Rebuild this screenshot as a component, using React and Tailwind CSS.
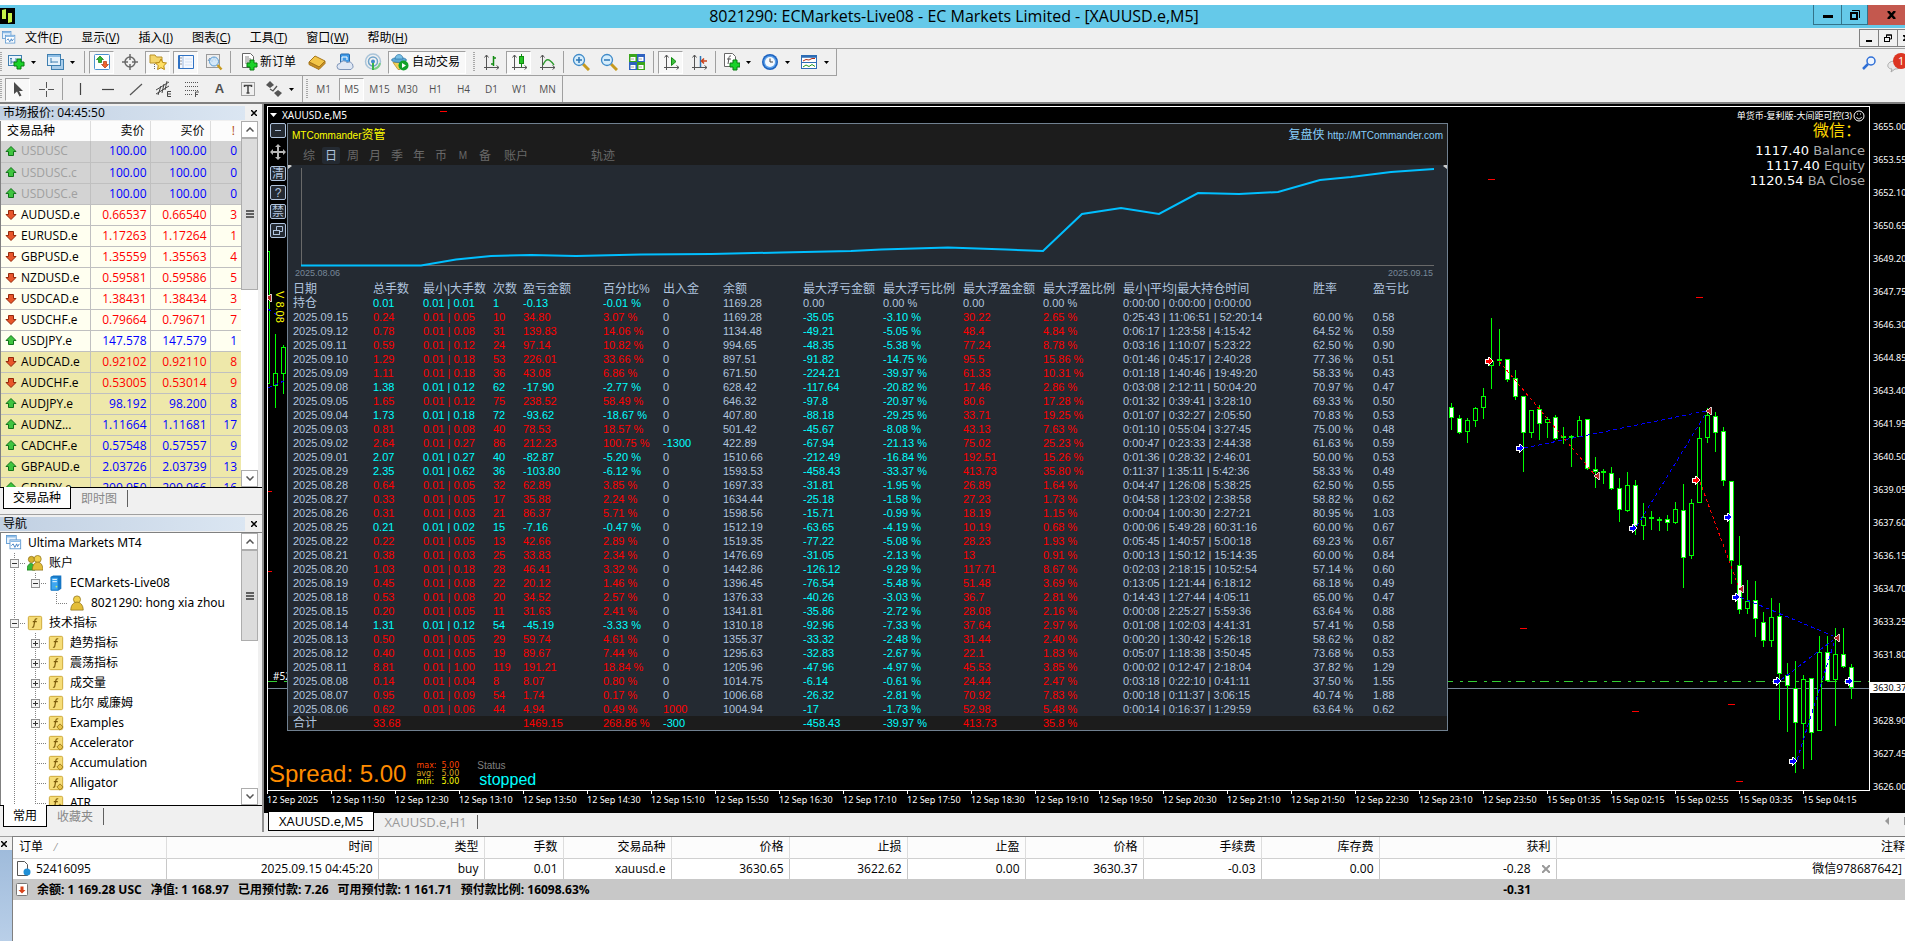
import React from 'react';

const UI = "font-['Open_Sans','Noto_Sans_CJK_SC',sans-serif]";
const CHART = "font-['Noto_Sans','Noto_Sans_CJK_SC',sans-serif]";
const REPORT = "font-['Liberation_Sans','Noto_Sans_CJK_SC',sans-serif]";

const menus = ['文件(F)', '显示(V)', '插入(I)', '图表(C)', '工具(T)', '窗口(W)', '帮助(H)'];

const quotes = [
  ['USDUSC', '100.00', '100.00', '0', 'up', 'off'],
  ['USDUSC.c', '100.00', '100.00', '0', 'up', 'off'],
  ['USDUSC.e', '100.00', '100.00', '0', 'up', 'off'],
  ['AUDUSD.e', '0.66537', '0.66540', '3', 'down', 'light'],
  ['EURUSD.e', '1.17263', '1.17264', '1', 'down', 'light'],
  ['GBPUSD.e', '1.35559', '1.35563', '4', 'down', 'light'],
  ['NZDUSD.e', '0.59581', '0.59586', '5', 'down', 'light'],
  ['USDCAD.e', '1.38431', '1.38434', '3', 'down', 'light'],
  ['USDCHF.e', '0.79664', '0.79671', '7', 'down', 'light'],
  ['USDJPY.e', '147.578', '147.579', '1', 'up', 'light'],
  ['AUDCAD.e', '0.92102', '0.92110', '8', 'down', 'dark'],
  ['AUDCHF.e', '0.53005', '0.53014', '9', 'down', 'dark'],
  ['AUDJPY.e', '98.192', '98.200', '8', 'up', 'dark'],
  ['AUDNZ...', '1.11664', '1.11681', '17', 'up', 'dark'],
  ['CADCHF.e', '0.57548', '0.57557', '9', 'up', 'dark'],
  ['GBPAUD.e', '2.03726', '2.03739', '13', 'up', 'dark'],
  ['GBPJPY.e', '200.950', '200.966', '16', 'up', 'dark'],
];

const rowBg = { off: 'bg-[#d3d3d3]', light: 'bg-[#fffff0]', dark: 'bg-[#eee8aa]' };

const tree = [
  { guides: [], icon: 'app', text: 'Ultima Markets MT4' },
  { guides: ['minus'], icon: 'users', text: '账户' },
  { guides: ['line', 'minusEnd'], icon: 'server', text: 'ECMarkets-Live08' },
  { guides: ['line', 'blank', 'end'], icon: 'user', text: '8021290: hong xia zhou' },
  { guides: ['minus'], icon: 'func', text: '技术指标' },
  { guides: ['line', 'plus'], icon: 'func', text: '趋势指标' },
  { guides: ['line', 'plus'], icon: 'func', text: '震荡指标' },
  { guides: ['line', 'plus'], icon: 'func', text: '成交量' },
  { guides: ['line', 'plus'], icon: 'func', text: '比尔 威廉姆' },
  { guides: ['line', 'plus'], icon: 'custom', text: 'Examples' },
  { guides: ['line', 'tee'], icon: 'custom', text: 'Accelerator' },
  { guides: ['line', 'tee'], icon: 'custom', text: 'Accumulation' },
  { guides: ['line', 'tee'], icon: 'custom', text: 'Alligator' },
  { guides: ['line', 'tee'], icon: 'custom', text: 'ATR' },
];

const reportHead = ['日期', '总手数', '最小|大手数', '次数', '盈亏金额', '百分比%', '出入金', '余额', '最大浮亏金额', '最大浮亏比例', '最大浮盈金额', '最大浮盈比例', '最小|平均|最大持仓时间', '胜率', '盈亏比'];

const reportRows = [
  ['持仓', '0.01', '0.01', '1', '-0.13', '-0.01', '0', '1169.28', '0.00', '0.00', '0.00', '0.00', '0:00:00 | 0:00:00 | 0:00:00', '', ''],
  ['2025.09.15', '0.24', '0.05', '10', '34.80', '3.07', '0', '1169.28', '-35.05', '-3.10', '30.22', '2.65', '0:25:43 | 11:06:51 | 52:20:14', '60.00 %', '0.58'],
  ['2025.09.12', '0.78', '0.08', '31', '139.83', '14.06', '0', '1134.48', '-49.21', '-5.05', '48.4', '4.84', '0:06:17 | 1:23:58 | 4:15:42', '64.52 %', '0.59'],
  ['2025.09.11', '0.59', '0.12', '24', '97.14', '10.82', '0', '994.65', '-48.35', '-5.38', '77.24', '8.78', '0:03:16 | 1:10:07 | 5:23:22', '62.50 %', '0.90'],
  ['2025.09.10', '1.29', '0.18', '53', '226.01', '33.66', '0', '897.51', '-91.82', '-14.75', '95.5', '15.86', '0:01:46 | 0:45:17 | 2:40:28', '77.36 %', '0.51'],
  ['2025.09.09', '1.11', '0.18', '36', '43.08', '6.86', '0', '671.50', '-224.21', '-39.97', '61.33', '10.31', '0:01:18 | 1:40:46 | 19:49:20', '58.33 %', '0.43'],
  ['2025.09.08', '1.38', '0.12', '62', '-17.90', '-2.77', '0', '628.42', '-117.64', '-20.82', '17.46', '2.86', '0:03:08 | 2:12:11 | 50:04:20', '70.97 %', '0.47'],
  ['2025.09.05', '1.65', '0.12', '75', '238.52', '58.49', '0', '646.32', '-97.8', '-20.97', '80.6', '17.28', '0:01:32 | 0:39:41 | 3:28:10', '69.33 %', '0.50'],
  ['2025.09.04', '1.73', '0.18', '72', '-93.62', '-18.67', '0', '407.80', '-88.18', '-29.25', '33.71', '19.25', '0:01:07 | 0:32:27 | 2:05:50', '70.83 %', '0.53'],
  ['2025.09.03', '0.81', '0.08', '40', '78.53', '18.57', '0', '501.42', '-45.67', '-8.08', '43.13', '7.63', '0:01:10 | 0:55:04 | 3:27:45', '75.00 %', '0.48'],
  ['2025.09.02', '2.64', '0.27', '86', '212.23', '100.75', '-1300', '422.89', '-67.94', '-21.13', '75.02', '25.23', '0:00:47 | 0:23:33 | 2:44:38', '61.63 %', '0.59'],
  ['2025.09.01', '2.07', '0.27', '40', '-82.87', '-5.20', '0', '1510.66', '-212.49', '-16.84', '192.51', '15.26', '0:01:36 | 0:28:32 | 2:46:01', '50.00 %', '0.53'],
  ['2025.08.29', '2.35', '0.62', '36', '-103.80', '-6.12', '0', '1593.53', '-458.43', '-33.37', '413.73', '35.80', '0:11:37 | 1:35:11 | 5:42:36', '58.33 %', '0.49'],
  ['2025.08.28', '0.64', '0.05', '32', '62.89', '3.85', '0', '1697.33', '-31.81', '-1.95', '26.89', '1.64', '0:04:47 | 1:26:08 | 5:38:25', '62.50 %', '0.55'],
  ['2025.08.27', '0.33', '0.05', '17', '35.88', '2.24', '0', '1634.44', '-25.18', '-1.58', '27.23', '1.73', '0:04:58 | 1:23:02 | 2:38:58', '58.82 %', '0.62'],
  ['2025.08.26', '0.31', '0.03', '21', '86.37', '5.71', '0', '1598.56', '-15.71', '-0.99', '18.19', '1.15', '0:00:04 | 1:00:30 | 2:27:21', '80.95 %', '1.03'],
  ['2025.08.25', '0.21', '0.02', '15', '-7.16', '-0.47', '0', '1512.19', '-63.65', '-4.19', '10.19', '0.68', '0:00:06 | 5:49:28 | 60:31:16', '60.00 %', '0.67'],
  ['2025.08.22', '0.22', '0.05', '13', '42.66', '2.89', '0', '1519.35', '-77.22', '-5.08', '28.23', '1.93', '0:05:45 | 1:40:57 | 5:00:18', '69.23 %', '0.67'],
  ['2025.08.21', '0.38', '0.03', '25', '33.83', '2.34', '0', '1476.69', '-31.05', '-2.13', '13', '0.91', '0:00:13 | 1:50:12 | 15:14:35', '60.00 %', '0.84'],
  ['2025.08.20', '1.03', '0.18', '28', '46.41', '3.32', '0', '1442.86', '-126.12', '-9.29', '117.71', '8.67', '0:02:03 | 2:18:15 | 10:52:54', '57.14 %', '0.60'],
  ['2025.08.19', '0.45', '0.08', '22', '20.12', '1.46', '0', '1396.45', '-76.54', '-5.48', '51.48', '3.69', '0:13:05 | 1:21:44 | 6:18:12', '68.18 %', '0.49'],
  ['2025.08.18', '0.53', '0.08', '20', '34.52', '2.57', '0', '1376.33', '-40.26', '-3.03', '36.7', '2.81', '0:14:43 | 1:27:44 | 4:05:11', '65.00 %', '0.47'],
  ['2025.08.15', '0.20', '0.05', '11', '31.63', '2.41', '0', '1341.81', '-35.86', '-2.72', '28.08', '2.16', '0:00:08 | 2:25:27 | 5:59:36', '63.64 %', '0.88'],
  ['2025.08.14', '1.31', '0.12', '54', '-45.19', '-3.33', '0', '1310.18', '-92.96', '-7.33', '37.64', '2.97', '0:01:08 | 1:02:03 | 4:41:31', '57.41 %', '0.58'],
  ['2025.08.13', '0.50', '0.05', '29', '59.74', '4.61', '0', '1355.37', '-33.32', '-2.48', '31.44', '2.40', '0:00:20 | 1:30:42 | 5:26:18', '58.62 %', '0.82'],
  ['2025.08.12', '0.40', '0.05', '19', '89.67', '7.44', '0', '1295.63', '-32.83', '-2.67', '22.1', '1.83', '0:05:07 | 1:18:38 | 3:50:45', '73.68 %', '0.53'],
  ['2025.08.11', '8.81', '1.00', '119', '191.21', '18.84', '0', '1205.96', '-47.96', '-4.97', '45.53', '3.85', '0:00:02 | 0:12:47 | 2:18:04', '37.82 %', '1.29'],
  ['2025.08.08', '0.14', '0.04', '8', '8.07', '0.80', '0', '1014.75', '-6.14', '-0.61', '24.44', '2.47', '0:03:18 | 0:22:10 | 0:41:11', '37.50 %', '1.55'],
  ['2025.08.07', '0.95', '0.09', '54', '1.74', '0.17', '0', '1006.68', '-26.32', '-2.81', '70.92', '7.83', '0:00:18 | 0:11:37 | 3:06:15', '40.74 %', '1.88'],
  ['2025.08.06', '0.62', '0.06', '44', '4.94', '0.49', '1000', '1004.94', '-17', '-1.73', '52.98', '5.48', '0:00:14 | 0:16:37 | 1:29:59', '63.64 %', '0.62'],
];

const prices = ['3655.00', '3653.55', '3652.10', '3650.65', '3649.20', '3647.75', '3646.30', '3644.85', '3643.40', '3641.95', '3640.50', '3639.05', '3637.60', '3636.15', '3634.70', '3633.25', '3631.80', '3630.37', '3628.90', '3627.45', '3626.00'];

const times = ['12 Sep 2025', '12 Sep 11:50', '12 Sep 12:30', '12 Sep 13:10', '12 Sep 13:50', '12 Sep 14:30', '12 Sep 15:10', '12 Sep 15:50', '12 Sep 16:30', '12 Sep 17:10', '12 Sep 17:50', '12 Sep 18:30', '12 Sep 19:10', '12 Sep 19:50', '12 Sep 20:30', '12 Sep 21:10', '12 Sep 21:50', '12 Sep 22:30', '12 Sep 23:10', '12 Sep 23:50', '15 Sep 01:35', '15 Sep 02:15', '15 Sep 02:55', '15 Sep 03:35', '15 Sep 04:15'];

// [wick top, wick bottom, body top, body bottom, filled]
const candles = [
  [403, 430, 407, 418, 1], [415, 434, 418, 433, 1], [418, 443, 420, 432, 0], [407, 427, 408, 421, 0],
  [388, 419, 396, 408, 0], [318, 389, 361, 366, 0], [329, 366, 359, 360, 0], [359, 382, 359, 380, 1],
  [370, 400, 378, 397, 1], [396, 472, 396, 433, 1], [410, 438, 410, 433, 0], [405, 440, 409, 424, 1],
  [417, 438, 419, 423, 0], [415, 440, 417, 439, 1], [427, 444, 436, 437, 0], [435, 467, 436, 437, 0],
  [416, 437, 420, 437, 0], [419, 470, 419, 469, 1], [457, 488, 469, 472, 1], [469, 484, 471, 472, 0],
  [467, 490, 473, 489, 1], [478, 522, 488, 510, 1], [472, 512, 485, 511, 0], [480, 535, 485, 526, 1],
  [503, 540, 517, 526, 0], [511, 530, 517, 518, 0], [517, 531, 519, 519, 0], [515, 531, 519, 523, 1],
  [502, 524, 509, 523, 0], [484, 588, 510, 558, 1], [499, 559, 503, 556, 0], [427, 503, 438, 503, 0],
  [408, 443, 415, 438, 0], [412, 452, 416, 433, 1], [427, 486, 431, 481, 1], [481, 584, 481, 561, 1],
  [536, 614, 565, 610, 1], [580, 614, 601, 609, 0], [581, 637, 600, 619, 1], [612, 647, 622, 641, 1],
  [598, 647, 617, 641, 0], [603, 720, 616, 674, 1], [663, 732, 675, 686, 1], [661, 773, 688, 723, 1],
  [675, 769, 679, 724, 0], [678, 760, 678, 733, 1], [636, 731, 652, 731, 0], [636, 682, 652, 681, 1],
  [628, 726, 654, 680, 0], [628, 668, 654, 667, 1], [664, 699, 667, 688, 1],
];

const buys = [[1520, 448], [1633, 528], [1728, 517], [1736, 597], [1777, 681], [1793, 761], [1849, 681]];
const sells = [[1489, 361], [1696, 480]];
const exits = [[1709, 411], [1597, 476], [1741, 589], [1837, 638], [269, 298]];
const ticks = [[1488, 179], [1696, 297], [1520, 628], [1632, 711], [1728, 704], [1736, 781], [440, 111], [265, 491], [265, 571]];

const orderHead = [
  ['时间', 'w-[212px]'], ['类型', 'w-[106px]'], ['手数', 'w-[79px]'], ['交易品种', 'w-[108px]'],
  ['价格', 'w-[118px]'], ['止损', 'w-[118px]'], ['止盈', 'w-[118px]'], ['价格', 'w-[118px]'],
  ['手续费', 'w-[118px]'], ['库存费', 'w-[118px]'],
];
const orderCells = ['2025.09.15 04:45:20', 'buy', '0.01', 'xauusd.e', '3630.65', '3622.62', '0.00', '3630.37', '-0.03', '0.00'];

const Plus = ({ x = 9, y = 8 }) => (
  <path d={`M${x + 3} ${y}h4v3h3v4h-3v3h-4v-3h-3v-4h3z`} fill="#19d229" stroke="#087a10" strokeWidth="1" />
);

const Axes = () => <path d="M4.500 2v15M2 14.500h15M2.500 4.500l2-2.500 2 2.500M14.500 12.500l2.500 2-2.500 2" stroke="#555" fill="none" />;

const icons = {
  newChart: <g><rect x="1.500" y="2.500" width="13" height="10" fill="#eaf4fc" stroke="#3f7fb0" /><path d="M4 5v6M4 9h8M3 6l1-1 1 1M9 5v3" stroke="#3f7fb0" fill="none" /><Plus x={7} y={6} /></g>,
  profiles: <g><rect x="5.500" y="6.500" width="12" height="10" fill="#a9cdea" stroke="#3f7fb0" /><rect x="1.500" y="1.500" width="13" height="11" fill="#e4f1fb" stroke="#3f7fb0" /><path d="M2 3h12" stroke="#8fbfe6" strokeWidth="2" /><path d="M5 5v5M5 9h7" stroke="#3f7fb0" /></g>,
  market: <g><rect x="1.500" y="1.500" width="15" height="15" rx="1" fill="#fff" stroke="#4a90d0" /><path d="M7 3l3.500 3.500H8.500v3h-3v-3H3.500z" fill="#2db52d" stroke="#137a13" strokeWidth=".7" /><path d="M12 15l-3.500-3.500h2v-3h3v3h2z" fill="#f0642d" stroke="#b23a10" strokeWidth=".7" /></g>,
  target: <g fill="none" stroke="#6a6a6a"><circle cx="9" cy="9" r="5" strokeWidth="1.500" /><path d="M9 1v6M9 11v6M1 9h6M11 9h6" strokeWidth="1.500" /></g>,
  folderStar: <g><path d="M1 2h5l1.500 2H13v6H1z" fill="#f4d56a" stroke="#b8922a" /><path d="M5.500 11v6" stroke="#666" strokeDasharray="1 1" /><path d="M12 6l1.700 3.500 3.800.500-2.700 2.700.600 3.800-3.400-1.800-3.400 1.800.600-3.800L6.500 10l3.800-.500z" fill="#ffe066" stroke="#b8860b" /></g>,
  dataWin: <g><rect x="1" y="2" width="16" height="14" rx="1" fill="#2f72c4" /><rect x="3" y="3" width="13" height="12" fill="#f4f8ff" /><path d="M6 3v12" stroke="#9db8dc" /><path d="M3.500 5h1M3.500 8h1M3.500 11h1" stroke="#333" /><path d="M8 6h7M8 9h7M8 12h7" stroke="#d6e3f3" /></g>,
  tester: <g><rect x="1.500" y="1.500" width="13" height="13" fill="#eee" stroke="#9a9a9a" /><path d="M3 8l2-3 2 4 2-5 2 4" stroke="#6d8fb3" fill="none" /><circle cx="9" cy="8.500" r="4.500" fill="#cfe6f9" fillOpacity=".85" stroke="#5a9bd1" /><path d="M12.500 12l4 4.500" stroke="#c79a1e" strokeWidth="2.500" /></g>,
  newOrder: <g><path d="M2.500.500h8l3 3v11h-11z" fill="#fff" stroke="#666" /><path d="M5 4h4M5 6h6M5 8h6M5 10h4" stroke="#888" /><Plus x={7} y={7} /></g>,
  book: <g><path d="M1 9l6-6 10 5-6 6z" fill="#f3c548" stroke="#a6761a" /><path d="M1 9v2.500l10 5 6-6V8l-6 6z" fill="#c98f22" stroke="#a6761a" /></g>,
  cloud: <g><rect x="4.500" y="1" width="9" height="9" rx="1" fill="#3f9be8" stroke="#2469ad" /><path d="M6 8V4h5v3" stroke="#fff" fill="none" /><path d="M4 16.500a3 3 0 010-6 4 4 0 017-1 3.500 3.500 0 014 7z" fill="#dfe7f3" stroke="#7f95b8" /></g>,
  signal: <g fill="none"><circle cx="9" cy="8.500" r="7.500" stroke="#a9c4d9" strokeWidth="1.500" /><circle cx="9" cy="8.500" r="4.500" stroke="#6fa3c9" strokeWidth="1.500" /><circle cx="9" cy="8.500" r="2" fill="#3e8ac8" /><path d="M9 10v7" stroke="#39b54a" strokeWidth="2" /><path d="M10 16a7.500 7.500 0 006-6" stroke="#7dcf86" strokeWidth="2" /></g>,
  auto: <g><path d="M2 9.500h12l-5 7H7z" fill="#f1cf58" stroke="#b38a1c" strokeWidth=".7" /><ellipse cx="8" cy="7" rx="7.500" ry="2.500" fill="#5aa7d6" stroke="#2d75a5" strokeWidth=".7" /><path d="M4 6c0-6 8-6 8 0z" fill="#79c0e6" stroke="#2d75a5" strokeWidth=".7" /><circle cx="12.500" cy="12.500" r="5" fill="#12a12a" /><path d="M11 10l4 2.500-4 2.500z" fill="#fff" /></g>,
  bar: <g><Axes /><path d="M11.500 3v10M9 11h2M11.500 5H14" stroke="#128a12" strokeWidth="1.500" /></g>,
  candle: <g><Axes /><path d="M11.500 1v13" stroke="#128a12" /><rect x="9.500" y="3.500" width="4" height="7" fill="#25c425" stroke="#128a12" /></g>,
  line: <g><Axes /><path d="M5 12c3-7 6-7 11 0" stroke="#2e9a2e" fill="none" strokeWidth="1.300" /></g>,
  zoomIn: <g><path d="M11 11l6 6" stroke="#c79a1e" strokeWidth="3" /><circle cx="7" cy="7" r="5.500" fill="#d6edfb" stroke="#3f8ac8" strokeWidth="1.300" /><path d="M4 7h6M7 4v6" stroke="#2d75b5" strokeWidth="1.500" /></g>,
  zoomOut: <g><path d="M11 11l6 6" stroke="#c79a1e" strokeWidth="3" /><circle cx="7" cy="7" r="5.500" fill="#d6edfb" stroke="#3f8ac8" strokeWidth="1.300" /><path d="M4 7h6" stroke="#2d75b5" strokeWidth="1.500" /></g>,
  tile: <g><path d="M1 1h8v8H1zM9 9h8v8H9z" fill="#3aa51c" /><path d="M9 1h8v8H9zM1 9h8v8H1z" fill="#2f62c0" /><path d="M2.500 4h5v4h-5zM10.500 4h5v4h-5zM2.500 12h5v4h-5zM10.500 12h5v4h-5z" fill="#fff" /><path d="M3 6h3M11 6h3M3 14h3M11 14h3" stroke="#aaa" /></g>,
  scroll: <g><Axes /><path d="M9.500 4.500l4.500 4-4.500 4z" fill="#3ec13e" stroke="#128a12" /></g>,
  shift: <g><Axes /><path d="M10.500 3v11" stroke="#2d75b5" strokeWidth="1.500" /><path d="M17 8h-5M14 5.500L11.500 8l2.500 2.500" stroke="#c8401a" strokeWidth="1.500" fill="none" /></g>,
  indicators: <g><path d="M2.500.500h8l3 3v10h-11z" fill="#fff" stroke="#666" /><path d="M9 3c-2-.5-2 1-2.200 3L6 11M5 6h4" stroke="#555" fill="none" /><Plus x={8} y={7} /></g>,
  clock: <g><circle cx="9" cy="9" r="8" fill="#1d63c0" /><circle cx="9" cy="9" r="6.500" fill="#5a9fe8" /><circle cx="9" cy="9" r="5" fill="#f4f9ff" /><path d="M9 5.500V9h3" stroke="#444" fill="none" /></g>,
  template: <g><rect x="1.500" y="2.500" width="15" height="13" fill="#fff" stroke="#2d6db5" /><path d="M1 3.500h16" stroke="#2d6db5" strokeWidth="2.500" /><path d="M1 9.500h16" stroke="#2d6db5" /><path d="M3 8l3-1.500 3 .5 3-1.500h3" stroke="#b03018" fill="none" /><path d="M3 14l3-2 3 1.500 3-2 3 2" stroke="#229a22" fill="none" /></g>,
  pointer: <path d="M5 2v12l3-2.500 2.500 5 2-1-2.500-4.500h4z" fill="#4a4a4a" />,
  cross: <path d="M9.500 2v6M9.500 11v6M2 9.500h6M11 9.500h6" stroke="#555" />,
  vline: <path d="M9.500 3v12" stroke="#444" strokeWidth="1.200" />,
  hline: <path d="M3 9.500h12" stroke="#444" strokeWidth="1.200" />,
  trend: <path d="M3 15L15 4" stroke="#555" strokeWidth="1.200" />,
  channel: <g stroke="#444" fill="none"><path d="M1 10l13-8M1 14l13-8M3 15l3-9M7 13l2-9M10 10l2-9" /><path d="M16 11.500h-3.500v5H16M12.500 14H16" /></g>,
  fibo: <g stroke="#555" fill="none"><path d="M2 2.500h14M2 6.500h14M2 10.500h14M2 14.500h8" strokeDasharray="1 1" /><path d="M12.500 17v-5H16M12.500 14.500H15" /></g>,
  label: <g><rect x="2.500" y="2.500" width="13" height="13" fill="none" stroke="#555" strokeDasharray="1 1" /><path d="M5.500 7V5.500h7V7M9 5.500V13M7.500 13h3" stroke="#444" strokeWidth="1.500" fill="none" /></g>,
  arrows: <g fill="#555"><path d="M1 5l4-4 4 4-4 3zM9 13l4-3 4 3-4 4z" /><path d="M5 9l3 2 4-5" stroke="#555" fill="none" strokeWidth="1.300" /></g>,
  app: <g><rect x=".500" y=".500" width="11" height="9" fill="#e9f3fd" stroke="#5a97d0" /><rect x="4.500" y="5.500" width="12" height="10" fill="#fff" stroke="#5a97d0" /><path d="M1 2h10M5 7h11" stroke="#8dbbe6" strokeWidth="1.500" /><path d="M6 12l2-2 2 4 2-4 1 3 2-3" stroke="#3a7bc0" fill="none" /></g>,
  users: <g stroke="#8a6d12" strokeWidth=".800"><circle cx="5" cy="5" r="3.500" fill="#d6b32f" /><path d="M0 17c0-10 9-10 9 0z" fill="#38b838" stroke="#137a13" /><circle cx="12" cy="4.500" r="4" fill="#f0cf4a" /><path d="M6 17c0-12 12-12 12 0z" fill="#e3bd38" /></g>,
  user: <g stroke="#8a6d12" strokeWidth=".800"><circle cx="9" cy="5" r="4" fill="#f0cf4a" /><path d="M2 17c0-12 14-12 14 0z" fill="#e3bd38" /></g>,
  server: <g><path d="M3 2l3-1.500h9v15L12 17.500H3z" fill="#1676c4" /><path d="M3.500 2.500h8v14.500h-8z" fill="#3ea7f0" stroke="#1676c4" /><path d="M5 5h5M5 7.500h5" stroke="#fff" /><circle cx="9.500" cy="13" r="1" fill="#c8f06a" /></g>,
  func: <g><rect x="1.500" y="1.500" width="15" height="15" rx="1.500" fill="#f6dd78" stroke="#c9a431" /><path d="M11.500 4.500c-2-1-2.500.500-2.800 2.500L7.500 13c-.300 1-1.200 1-1.800.500M6.500 7.500H11" stroke="#7a5a0a" fill="none" strokeWidth="1.300" /></g>,
};
icons.custom = <g>{icons.func}<path d="M13.500 10l3.500 3.500-3.500 3.500-3.500-3.500z" fill="#e8c34a" stroke="#9a7a1a" /></g>;

const Icon = ({ name, className = 'h-[18px] w-[18px]' }) => (
  <svg viewBox="0 0 18 18" className={`shrink-0 ${className}`} aria-hidden="true">{icons[name]}</svg>
);

const Grip = () => <div className="h-5 w-[2px] shrink-0 bg-[repeating-linear-gradient(#a8a8a8_0_1px,transparent_1px_2px)]" />;
const Sep = () => <div className="mx-px h-[22px] w-px shrink-0 bg-[#a0a0a0]" />;

const Tool = ({ name, label, on, children }) => (
  <button aria-label={label} className={`flex h-[23px] w-[25px] shrink-0 items-center justify-center border text-[#505050] ${on ? 'border-t-[#a0a0a0] border-l-[#a0a0a0] border-r-white border-b-white bg-[#f8f8f8]' : 'border-transparent'}`}>
    {name ? <Icon name={name} /> : children}
  </button>
);

const Split = ({ name, label }) => (
  <button aria-label={label} className="flex h-[23px] w-9 shrink-0 items-center gap-[6px] pl-[2px]">
    <Icon name={name} />
    <svg viewBox="0 0 5 3" className="h-[3px] w-[5px]"><path d="M0 0h5L2.500 3z" /></svg>
  </button>
);

const Guide = ({ type }) => (
  <svg viewBox="0 0 21 20" className="h-5 w-[21px] shrink-0" fill="none" stroke="#808080" strokeDasharray="1 1">
    {type !== 'blank' && <path d={type === 'end' || type === 'minusEnd' ? 'M10.500 0v10' : 'M10.500 0v20'} />}
    {type !== 'blank' && type !== 'line' && <path d="M10 10.500h11" />}
    {/plus|minus/.test(type) && (
      <g strokeDasharray="none">
        <rect x="6.500" y="6.500" width="8" height="8" fill="#f4f4f4" stroke="#919191" />
        <path d={type === 'plus' ? 'M8 10.500h5M10.500 8v5' : 'M8 10.500h5'} stroke="#333" />
      </g>
    )}
  </svg>
);

const QuoteArrow = ({ dir }) => (
  <svg viewBox="0 0 12 11" className="h-[11px] w-3 shrink-0">
    <path d={dir === 'up' ? 'M6 .500L11 5.500H8.500v4h-5v-4H1z' : 'M6 10.500L11 5.500H8.500v-4h-5v4H1z'} fill={dir === 'up' ? '#3fc43f' : '#e8562a'} stroke={dir === 'up' ? '#12731a' : '#93290c'} />
  </svg>
);

const ScrollBar = ({ thumb }) => (
  <div className="flex w-[17px] shrink-0 flex-col bg-white">
    <button aria-label="up" className="flex h-[17px] shrink-0 items-center justify-center border border-[#adadad]">
      <svg viewBox="0 0 8 5" className="h-[5px] w-2" fill="none" stroke="#555" strokeWidth="1.500"><path d="M.500 4.500L4 1l3.500 3.500" /></svg>
    </button>
    <div className={`flex items-center justify-center border border-[#adadad] bg-[#dcdcdc] ${thumb}`}>
      <svg viewBox="0 0 8 8" className="h-2 w-2" stroke="#606060" strokeWidth="2"><path d="M0 1h8M0 4h8M0 7h8" /></svg>
    </div>
    <div className="flex-1" />
    <button aria-label="down" className="flex h-[17px] shrink-0 items-center justify-center border border-[#adadad]">
      <svg viewBox="0 0 8 5" className="h-[5px] w-2" fill="none" stroke="#555" strokeWidth="1.500"><path d="M.500.500L4 4l3.500-3.500" /></svg>
    </button>
  </div>
);

const PanelTitle = ({ children }) => (
  <div className="flex h-[17px] shrink-0 items-center">
    <div className="h-[14px] flex-1 bg-linear-to-r from-[#c1d0e2] to-[#dbe6f2] pl-[3px] leading-[13px]">{children}</div>
    <button aria-label="close" className="flex w-[17px] justify-center">
      <svg viewBox="0 0 6 6" className="h-[6px] w-[6px]" stroke="#000" strokeWidth="1.500"><path d="M0 0l6 6M6 0L0 6" /></svg>
    </button>
  </div>
);

const PanelTabs = ({ active, other }) => (
  <div className="flex h-[27px] shrink-0 items-start border-t border-black pl-[3px]">
    <button className="-mt-px h-[22px] border border-t-0 border-black bg-white px-[9px] leading-5">{active}</button>
    <button className="mt-[2px] h-[17px] border-r border-[#606060] px-[10px] leading-4 text-[#888]">{other}</button>
  </div>
);

const TitleBar = () => (
  <header className="mt-[5px] flex h-[23px] items-start bg-[#65c9e9]">
    <svg viewBox="0 0 15 16" className="mt-[3px] h-4 w-[15px] shrink-0"><rect width="15" height="16" /><path d="M2 2l4-1v10H2zM8 5h4v9l-4 1z" fill="#c4f04a" /></svg>
    <h1 className="flex-1 pl-20 text-center text-[16px] leading-[22px]">8021290: ECMarkets-Live08 - EC Markets Limited - [XAUUSD.e,M5]</h1>
    <button aria-label="minimize" className="flex h-5 w-[29px] items-center justify-center border border-t-0 border-[#33738a]"><span className="mt-1 h-[3px] w-[10px] bg-black" /></button>
    <button aria-label="restore" className="flex h-5 w-[26px] items-center justify-center border-r border-b border-[#33738a]">
      <svg viewBox="0 0 10 10" className="h-[10px] w-[10px]" fill="none" stroke="#000"><path d="M2 .500h7.500V8" /><rect x="1" y="3" width="6" height="6" strokeWidth="2" /></svg>
    </button>
    <button aria-label="close window" className="flex h-5 w-[37px] items-center justify-center bg-[#c4584e] pl-[9px]">
      <svg viewBox="0 0 9 8" className="h-2 w-[9px]" stroke="#000" strokeWidth="2.500"><path d="M1 0l7 8M8 0L1 8" /></svg>
    </button>
  </header>
);

const MenuBar = () => (
  <nav className="flex h-[21px] items-center overflow-hidden border-b border-[#a0a0a0]">
    <Icon name="app" className="ml-[2px] h-[14px] w-[14px]" />
    <div className="ml-[9px] flex flex-1 gap-[19px]">
      {menus.map((m) => (
        <button key={m} className="leading-4">{m.slice(0, 3)}<u className="underline-offset-1">{m[3]}</u>)</button>
      ))}
    </div>
    <button aria-label="minimize chart" className="flex h-[18px] w-5 items-end justify-center border border-[#808080] pb-1"><span className="h-[2px] w-[6px] bg-black" /></button>
    <button aria-label="restore chart" className="flex h-[18px] w-[19px] items-center justify-center border-y border-r border-[#808080]">
      <svg viewBox="0 0 8 8" className="h-2 w-2" fill="none" stroke="#000"><path d="M2.500 3V1h5v4H6" /><path d="M2 1h6" /><rect x=".500" y="3.500" width="5" height="4" /></svg>
    </button>
    <button aria-label="close chart" className="flex h-[18px] w-[7px] items-center justify-end overflow-hidden border-y border-[#808080]">
      <svg viewBox="0 0 2 6" className="h-[6px] w-[2px]" stroke="#000" strokeWidth="2"><path d="M0 0l4 3-4 3" fill="none" /></svg>
    </button>
  </nav>
);

const Toolbars = () => (
  <div className="flex border-b-2 border-[#808080]">
    <div className="min-w-0 flex-1">
      <div className="flex h-[27px] w-fit items-center gap-[3px] border-r border-b border-[#a0a0a0] pr-[2px]">
        <Grip />
        <Split name="newChart" label="new chart" />
        <Split name="profiles" label="profiles" />
        <Sep />
        <Tool name="market" label="market watch" on />
        <Tool name="target" label="crosshair window" />
        <Tool name="folderStar" label="navigator" on />
        <Tool name="dataWin" label="terminal" on />
        <Tool name="tester" label="tester" />
        <Sep />
        <button className="flex h-[23px] w-[66px] shrink-0 items-center gap-[2px] pl-[5px] whitespace-nowrap"><Icon name="newOrder" />新订单</button>
        <Tool name="book" label="editor" />
        <Tool name="cloud" label="hosting" />
        <Tool name="signal" label="signals" />
        <button className="flex h-[23px] w-[78px] shrink-0 items-center gap-[3px] border border-t-[#a0a0a0] border-r-white border-b-white border-l-[#a0a0a0] bg-[#f8f8f8] pl-[2px] whitespace-nowrap"><Icon name="auto" />自动交易</button>
        <span className="w-px" />
        <Grip />
        <Tool name="bar" label="bar chart" />
        <Tool name="candle" label="candlesticks" on />
        <Tool name="line" label="line chart" />
        <Sep />
        <Tool name="zoomIn" label="zoom in" />
        <Tool name="zoomOut" label="zoom out" />
        <Tool name="tile" label="tile windows" />
        <Sep />
        <Tool name="scroll" label="auto scroll" on />
        <Tool name="shift" label="chart shift" />
        <Sep />
        <Split name="indicators" label="indicators" />
        <Split name="clock" label="periods" />
        <Split name="template" label="templates" />
      </div>
      <div className="flex h-[26px] w-fit items-center gap-[3px] border-r border-[#a0a0a0] pr-[2px]">
        <Grip />
        <Tool name="pointer" label="cursor" on />
        <Tool name="cross" label="crosshair" />
        <Sep />
        <Tool name="vline" label="vertical line" />
        <Tool name="hline" label="horizontal line" />
        <Tool name="trend" label="trendline" />
        <Tool name="channel" label="channel" />
        <Tool name="fibo" label="fibonacci" />
        <Tool><b className="font-['Liberation_Sans',sans-serif] text-[13px]">A</b></Tool>
        <Tool name="label" label="text label" />
        <Split name="arrows" label="arrows" />
        <div className="h-[26px] w-px bg-[#a0a0a0]" />
        <Grip />
        {['M1', 'M5', 'M15', 'M30', 'H1', 'H4', 'D1', 'W1', 'MN'].map((p) => (
          <Tool key={p} on={p === 'M5'}><span className="text-[10px]">{p}</span></Tool>
        ))}
      </div>
    </div>
    <div className="flex h-7 items-center gap-[10px]">
      <svg viewBox="0 0 14 14" className="h-[14px] w-[14px]" fill="none" stroke="#2f6fd6"><circle cx="9" cy="5" r="4" strokeWidth="1.500" fill="#eef5ff" /><path d="M6 8l-5 5" strokeWidth="2.500" /></svg>
      <svg viewBox="0 0 19 20" className="h-5 w-[19px]">
        <path d="M9 8c-9 0-9 8-3 8l-1 3 4-3c9 0 9-8 0-8z" fill="#e8e8e8" stroke="#aaa" />
        <circle cx="15" cy="8" r="8" fill="#dc3522" />
        <text x="12" y="12" fontSize="11" fill="#fff">1</text>
      </svg>
    </div>
  </div>
);

const MarketWatch = () => (
  <>
    <PanelTitle>市场报价: 04:45:50</PanelTitle>
    <div className="flex h-[366px] shrink-0 overflow-hidden border-l border-[#808080] bg-white">
      <div className="flex-1 overflow-hidden">
        <table className="w-full table-fixed border-collapse">
          <thead>
            <tr className="h-5 bg-[#fcfcfc]">
              <th className="w-[89px] border-r border-[#ddd] pl-[6px] text-left font-normal">交易品种</th>
              <th className="w-[60px] border-r border-[#ddd] pr-[5px] text-right font-normal">卖价</th>
              <th className="w-[60px] border-r border-[#ddd] pr-[5px] text-right font-normal">买价</th>
              <th className="pr-[6px] text-right font-normal text-[#b04a10]">!</th>
            </tr>
          </thead>
          <tbody>
            {quotes.map(([symbol, bid, ask, spread, dir, kind]) => {
              const color = dir === 'up' ? 'text-[#0000ff]' : 'text-[#ff0000]';
              return (
                <tr key={symbol} className={`h-[21px] ${rowBg[kind]}`}>
                  <td className="border-r border-b border-[#c0c0c0] p-0 pl-[4px] leading-5">
                    <div className={`flex items-center gap-[4px] ${kind === 'off' ? 'text-[#a0a0a0]' : ''}`}><QuoteArrow dir={dir} />{symbol}</div>
                  </td>
                  <td className={`border-r border-b border-[#c0c0c0] p-0 pr-[3px] text-right leading-5 ${color}`}>{bid}</td>
                  <td className={`border-r border-b border-[#c0c0c0] p-0 pr-[3px] text-right leading-5 ${color}`}>{ask}</td>
                  <td className={`border-b border-[#c0c0c0] p-0 pr-[4px] text-right leading-5 ${color}`}>{spread}</td>
                </tr>
              );
            })}
          </tbody>
        </table>
      </div>
      <ScrollBar thumb="h-[152px]" />
      <div className="w-1 bg-[#f0f0f0]" />
    </div>
    <PanelTabs active="交易品种" other="即时图" />
  </>
);

const Navigator = () => (
  <>
    <div className="border-t border-[#a0a0a0]"><PanelTitle>导航</PanelTitle></div>
    <div className="flex h-[273px] shrink-0 overflow-hidden border-t border-l border-[#808080] bg-white">
      <ul className={`flex-1 overflow-hidden pl-[3px] ${CHART}`}>
        {tree.map((n) => (
          <li key={n.text} className="flex h-5 items-center whitespace-nowrap">
            {n.guides.map((g, i) => <Guide key={i} type={g} />)}
            <span className="flex w-[24px] shrink-0 pl-[2px]"><Icon name={n.icon} className="h-4 w-4" /></span>
            {n.text}
          </li>
        ))}
      </ul>
      <ScrollBar thumb="h-[91px]" />
      <div className="w-1 bg-[#f0f0f0]" />
    </div>
    <PanelTabs active="常用" other="收藏夹" />
  </>
);

const Arrow = ({ x, y, fill }) => (
  <path d={`M${x - 4} ${y - 2}h3v-2h1l4 4-4 4h-1v-2h-3z`} fill={fill} stroke="#fff" />
);

const PriceChart = () => (
  <svg viewBox="268 107 1601 683" preserveAspectRatio="xMaxYMin slice" className="absolute inset-0 h-full w-full" shapeRendering="crispEdges">
    <path d="M268 681.500h1601" stroke="#32cd32" strokeDasharray="9 7 3 5" />
    <path d="M268 688.500h1601" stroke="#778899" />
    <g stroke="#00ff00">
      {candles.map(([top, bottom, open, close, filled], i) => (
        <g key={i}>
          <path d={`M${1451 + i * 8}.5 ${top}V${bottom}`} />
          <rect x={1449.5 + i * 8} y={open + 0.5} width="4" height={Math.max(close - open - 1, 0.5)} fill={filled ? '#fff' : '#000'} />
        </g>
      ))}
      <path d="M268 251.500h1.500v132h-1.500M275.500 334v74M283.500 345v49" fill="none" />
      <rect x="273.500" y="373.500" width="4" height="12" fill="#000" />
      <rect x="281.500" y="347.500" width="4" height="26" fill="#000" />
    </g>
    <g fill="none" stroke="#0000ff" strokeDasharray="4 3">
      <path d="M1524 448L1706 411M1637 526L1706 413M1740 597L1833 636M1781 680L1833 640M1797 760L1835 640M268 309l18 12M268 388l18-8" />
    </g>
    <path d="M1499 361L1594 474M1700 482L1738 585" fill="none" stroke="#ff0000" strokeDasharray="3 3" />
    {exits.map(([x, y]) => <path key={x} d={`M${x - 3} ${y}l5-4v8z`} fill="#b22222" stroke="#fff" strokeWidth=".800" />)}
    {buys.map(([x, y]) => <Arrow key={x} x={x} y={y} fill="#0000ff" />)}
    {sells.map(([x, y]) => <Arrow key={x} x={x} y={y} fill="#ff0000" />)}
    {ticks.map(([x, y]) => <rect key={`${x}-${y}`} x={x} y={y} width="7" height="1" fill="#ff0000" />)}
  </svg>
);

const tone = (v) => (Number(v) < 0 ? 'text-[#00ffff]' : Number(v) > 0 ? 'text-[#ff0000]' : '');

const Report = () => (
  <section className={`absolute top-[16px] left-[19px] w-[1161px] border border-[#708090] bg-[#242a32] text-[11px] text-[#b0c4de] ${REPORT}`}>
    <div className="bg-[#1c1c1c]">
      <div className="flex h-[22px] items-center justify-between pr-1 pl-[4px] text-[12px]">
        <h2 className="text-[#ffff00]"><span className="text-[10px]">MTCommander</span>资管</h2>
        <a href="#site" className="text-[10px] text-[#87cefa]"><span className="text-[12px]">复盘侠</span> http://MTCommander.com</a>
      </div>
      <div className="flex h-[19px] items-center gap-1 pl-3 text-[12px] leading-4 text-[#696969]">
        {['综', '日', '周', '月', '季', '年', '币', 'M', '备'].map((t) => (
          <button key={t} className={`h-[17px] w-[18px] rounded-xs ${t === '日' ? 'bg-[#242a32] text-[#b0c4de]' : ''} ${t === 'M' ? 'text-[10px]' : ''}`}>{t}</button>
        ))}
        <button className="w-9">账户</button>
        <button className="ml-[47px] w-9">轨迹</button>
      </div>
    </div>
    <svg viewBox="287 165 1159 102" className="block h-[102px] w-full" fill="none">
      <path d="M300.500 168V265.500H1433" stroke="#696969" />
      <path d="M300 265.500H420L455 259.500L490 256L530 255L575 256L640 254.500L710 254L780 252.500L850 251L880 249.500L947 247.500L1005 249.500L1042 251L1081 214L1120 208L1158 214L1197 193L1238 194L1277 192L1319 180L1350 177L1390 172L1433 169" stroke="#00bfff" strokeWidth="2" />
      <path d="M287 163l4 3-4 3zM1446 163l-4 3 4 3z" fill="#ccc" />
    </svg>
    <div className="flex h-3 justify-between pr-[14px] pl-[7px] text-[9px] leading-[12px] text-[#778899]">
      <span>2025.08.06</span>
      <span>2025.09.15</span>
    </div>
    <table className="mt-[3px] w-full table-fixed border-collapse text-left leading-[14px] whitespace-nowrap">
      <colgroup>
        <col className="w-[85px]" /><col className="w-[50px]" /><col className="w-[70px]" /><col className="w-[30px]" />
        <col className="w-[80px]" /><col className="w-[60px]" /><col className="w-[60px]" /><col className="w-[80px]" />
        <col className="w-[80px]" /><col className="w-[80px]" /><col className="w-[80px]" /><col className="w-[80px]" />
        <col className="w-[190px]" /><col className="w-[60px]" /><col />
      </colgroup>
      <thead>
        <tr className="h-[14px]">
          {reportHead.map((h, i) => <th key={h} className={`p-0 text-[12px] font-normal ${i ? '' : 'pl-[5px]'}`}>{h}</th>)}
        </tr>
      </thead>
      <tbody>
        {reportRows.map((r) => {
          const c = tone(r[4]);
          return (
            <tr key={r[0]} className="h-[14px]">
              <td className={`p-0 pl-[5px] ${r[0] === '持仓' ? 'text-[12px]' : ''}`}>{r[0]}</td>
              <td className={`p-0 ${c}`}>{r[1]}</td>
              <td className={`p-0 ${c}`}>0.01 | {r[2]}</td>
              <td className={`p-0 ${c}`}>{r[3]}</td>
              <td className={`p-0 ${c}`}>{r[4]}</td>
              <td className={`p-0 ${c}`}>{r[5]} %</td>
              <td className={`p-0 ${tone(r[6])}`}>{r[6]}</td>
              <td className="p-0">{r[7]}</td>
              <td className={`p-0 ${tone(r[8])}`}>{r[8]}</td>
              <td className={`p-0 ${tone(r[9])}`}>{r[9]} %</td>
              <td className={`p-0 ${tone(r[10])}`}>{r[10]}</td>
              <td className={`p-0 ${tone(r[11])}`}>{r[11]} %</td>
              <td className="p-0">{r[12]}</td>
              <td className="p-0">{r[13]}</td>
              <td className="p-0">{r[14]}</td>
            </tr>
          );
        })}
      </tbody>
      <tfoot>
        <tr className="h-[14px] bg-[#1c1c1c] text-[#ff0000]">
          <td className="p-0 pl-[5px] text-[12px] text-[#b0c4de]">合计</td>
          <td className="p-0">33.68</td>
          <td /><td />
          <td className="p-0">1469.15</td>
          <td className="p-0">268.86 %</td>
          <td className="p-0 text-[#00ffff]">-300</td>
          <td />
          <td className="p-0 text-[#00ffff]">-458.43</td>
          <td className="p-0 text-[#00ffff]">-39.97 %</td>
          <td className="p-0">413.73</td>
          <td className="p-0">35.8 %</td>
          <td /><td /><td />
        </tr>
      </tfoot>
    </table>
  </section>
);

const sideBtn = 'flex h-[15px] w-4 items-center justify-center rounded-xs border border-[#b0c4de] bg-[#242a32] text-[12px] leading-none';

const SideButtons = () => (
  <div className={`absolute top-[16px] left-[2px] flex flex-col gap-1 text-[#b0c4de] ${REPORT}`}>
    <button aria-label="collapse" className={sideBtn}><span className="h-px w-[6px] bg-[#b0c4de]" /></button>
    <button aria-label="move" className="my-[2px] h-4 w-4">
      <svg viewBox="0 0 16 16" className="h-4 w-4" fill="#b8b8b8"><path d="M8 0l3 3H9v4h4V5l3 3-3 3V9H9v4h2l-3 3-3-3h2V9H3v2L0 8l3-3v2h4V3H5z" /></svg>
    </button>
    <button className={sideBtn}>清</button>
    <button className={sideBtn}>?</button>
    <button className={sideBtn}>禁</button>
    <button aria-label="windows" className={sideBtn}>
      <svg viewBox="0 0 10 10" className="h-[10px] w-[10px]" fill="none" stroke="#b0c4de"><path d="M3.500 4V.500h6v5H7" /><rect x=".500" y="4.500" width="6" height="4" /></svg>
    </button>
  </div>
);

const ChartWindow = () => (
  <div className={`flex flex-1 flex-col bg-black pt-[2px] pl-[3px] text-white ${CHART}`}>
    <div className="flex flex-1">
      <div className="relative flex-1 overflow-hidden border border-white">
        <PriceChart />
        <div className="absolute top-[2px] left-[2px] flex items-center gap-[5px] text-[10px] leading-3">
          <svg viewBox="0 0 7 4" className="h-1 w-[7px]"><path d="M0 0h7L3.500 4z" fill="#fff" /></svg>
          XAUUSD.e,M5
        </div>
        <div className={`absolute top-[184px] left-[6px] text-[11px] leading-3 text-[#ffff00] [writing-mode:vertical-rl] ${REPORT}`}>V 8.08</div>
        <div className="absolute top-[563px] left-[5px] text-[10px] leading-3">#52416095</div>
        <SideButtons />
        <Report />
        <div className="absolute top-[2px] right-1 flex flex-col items-end text-right">
          <div className="flex items-center gap-px text-[9px] leading-[14px]">
            单货币-复利版-大间距可控(3)
            <svg viewBox="0 0 12 12" className="h-3 w-3" fill="none" stroke="#fff"><circle cx="6" cy="6" r="5" /><path d="M3.500 7c1 2.500 4 2.500 5 0M4.500 3.500v1M7.500 3.500v1" /></svg>
          </div>
          <div className="mb-[6px] pr-[4px] text-[16px] leading-[14px] text-[#ffd700]">微信：</div>
          <div className="font-['DejaVu_Sans',sans-serif] text-[13px] leading-[15px] text-[#a9a9a9]">
            <div><span className="text-white">1117.40</span> Balance</div>
            <div><span className="text-white">1117.40</span> Equity</div>
            <div><span className="text-white">1120.54</span> BA Close</div>
          </div>
        </div>
        <div className={`absolute bottom-0 left-px flex items-center gap-[10px] ${REPORT}`}>
          <div className="text-[24px] leading-8 text-[#ff8c00]">Spread: 5.00</div>
          <div className="grid grid-cols-[25px_auto] font-['DejaVu_Sans',sans-serif] text-[8px] leading-2">
            <span className="text-[#ff4500]">max:</span><span className="text-[#ff4500]">5.00</span>
            <span className="text-[#daa520]">avg:</span><span className="text-[#daa520]">5.00</span>
            <span className="text-[#ffff00]">min:</span><span className="text-[#ffff00]">5.00</span>
          </div>
          <div className="pl-2">
            <div className="text-[10px] leading-3 text-[#808080]">Status</div>
            <div className="pl-[2px] text-[16px] leading-4 text-[#00ffff]">stopped</div>
          </div>
        </div>
      </div>
      <div className="-mb-3 w-[35px] overflow-hidden pt-1 text-[9px]">
        {prices.map((p) => (
          <div key={p} className="flex h-[33px] items-center">
            <span className="h-px w-[2px] bg-white" />
            <span className={`flex-1 pl-[3px] leading-[11px] ${p === '3630.37' ? 'bg-white text-black' : ''}`}>{p}</span>
          </div>
        ))}
      </div>
    </div>
    <div className="flex h-5 overflow-hidden text-[9px] whitespace-nowrap">
      {times.map((t) => (
        <div key={t} className="w-16 shrink-0">
          <div className="h-[3px] w-px bg-white" />
          <div className="leading-3">{t}</div>
        </div>
      ))}
    </div>
  </div>
);

const ChartTabs = () => (
  <div className="flex h-[21px] items-start border-t-2 border-black pl-1 text-[13px]">
    <button className="-mt-px h-[19px] border border-t-0 border-black bg-white px-[10px] leading-[18px]">XAUUSD.e,M5</button>
    <button className="mt-[2px] h-[14px] border-r border-[#606060] px-[10px] leading-[14px] text-[#999]">XAUUSD.e,H1</button>
    <div className="flex-1" />
    <svg viewBox="0 0 20 8" className="mt-1 h-2 w-5" fill="#999"><path d="M4 0v8L0 4zM19 0h1v8h-1z" /></svg>
  </div>
);

const Terminal = () => (
  <section className="flex flex-1 border-t-4 border-[#f0f0f0]">
    <div className="flex w-3 shrink-0 flex-col border-t border-[#a0a0a0]">
      <button aria-label="close terminal" className="flex h-[13px] items-center pl-px">
        <svg viewBox="0 0 6 6" className="h-[6px] w-[6px]" stroke="#000" strokeWidth="1.500"><path d="M0 0l6 6M6 0L0 6" /></svg>
      </button>
      <div className="flex-1 bg-linear-to-b from-[#9fbbdb] to-[#b9cfe8]" />
    </div>
    <div className="flex-1 border-t border-l border-[#808080] bg-white">
      <table className="w-full table-fixed border-collapse whitespace-nowrap">
        <thead>
          <tr className="h-[21px] border-b border-[#d0d0d0] bg-[#fcfcfc]">
            <th className="w-[153px] border-r border-[#ddd] p-0 pl-[6px] text-left font-normal">订单<span className="pl-3 text-[10px] text-[#888]">⁄</span></th>
            {orderHead.map(([h, w], i) => <th key={i} className={`border-r border-[#ddd] p-0 pr-[5px] text-right font-normal ${w}`}>{h}</th>)}
            <th className="w-[177px] border-r border-[#ddd] p-0 pr-[5px] text-right font-normal">获利</th>
            <th className="p-0 text-right font-normal">注释</th>
          </tr>
        </thead>
        <tbody>
          <tr className="h-[21px]">
            <td className="border-r border-[#c8c8c8] p-0 pl-[3px]">
              <div className="flex items-center gap-[5px]">
                <svg viewBox="0 0 15 15" className="h-[15px] w-[15px]"><path d="M1.500.500h7l3 3v11h-10z" fill="#fff" stroke="#555" /><circle cx="11" cy="11" r="3.500" fill="#1f8fd6" /></svg>
                52416095
              </div>
            </td>
            {orderCells.map((c, i) => <td key={i} className="border-r border-[#c8c8c8] p-0 pr-[5px] text-right">{c}</td>)}
            <td className="border-r border-[#c8c8c8] p-0 pr-[6px]">
              <div className="flex items-center justify-end gap-[11px]">
                -0.28
                <svg viewBox="0 0 8 8" className="h-2 w-2" stroke="#999" strokeWidth="2"><path d="M0 0l8 8M8 0L0 8" /></svg>
              </div>
            </td>
            <td className="p-0 pr-[3px] text-right">微信978687642]</td>
          </tr>
          <tr className="h-[21px] bg-[#c8c8c8] font-bold">
            <td colSpan={11} className="p-0 pl-[3px]">
              <div className="flex items-center gap-[9px]">
                <svg viewBox="0 0 12 13" className="h-[13px] w-3"><rect x=".500" y=".500" width="11" height="12" rx="1" fill="#fff" stroke="#777" /><path d="M6 10.500L2.500 7h2V3.500h3V7h2z" fill="#d8441c" /></svg>
                <span>余额: 1 169.28 USC</span><span>净值: 1 168.97</span><span>已用预付款: 7.26</span><span>可用预付款: 1 161.71</span><span>预付款比例: 16098.63%</span>
              </div>
            </td>
            <td className="p-0 pr-[25px] text-right">-0.31</td>
            <td />
          </tr>
        </tbody>
      </table>
    </div>
  </section>
);

const App = () => {
  return (
    <div className={`flex min-h-screen flex-col overflow-hidden bg-white text-[12px] leading-4 text-black ${UI}`}>
      <TitleBar />
      <div className="flex flex-1 flex-col bg-[#f0f0f0]">
        <MenuBar />
        <Toolbars />
        <main className="flex">
          <aside className="flex w-[264px] shrink-0 flex-col border-r-2 border-[#909090]">
            <MarketWatch />
            <Navigator />
          </aside>
          <div className="flex min-w-0 flex-1 flex-col">
            <ChartWindow />
            <ChartTabs />
          </div>
        </main>
        <Terminal />
      </div>
    </div>
  );
};

export default App;
